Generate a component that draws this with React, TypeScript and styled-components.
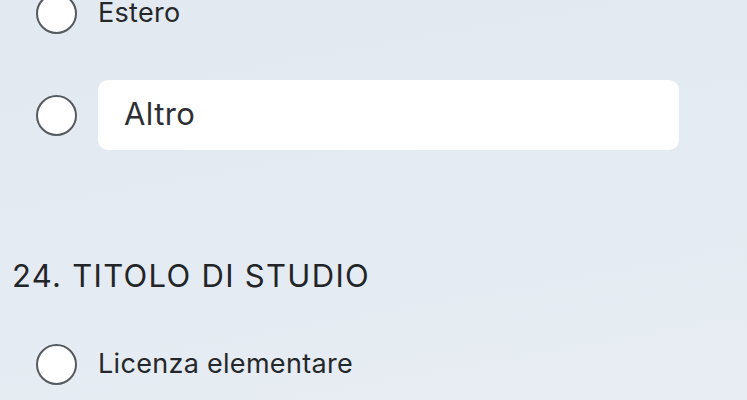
import React from "react";
import styled, { createGlobalStyle } from "styled-components";

const GlobalStyle = createGlobalStyle`
  html, body {
    margin: 0;
    padding: 0;
    background: #e4eaf1;
    font-family: Inter, Roboto, sans-serif;
    overflow: hidden;
  }
`;

const Page = styled.div`
  width: 747px;
  height: 400px;
  overflow: hidden;
  background: linear-gradient(170deg, #e3e9f0 0%, #e5ebf2 60%, #e7edf3 100%);
  display: flex;
  flex-direction: column;
`;

const Options = styled.div<{ $top: number; $gap?: number }>`
  display: flex;
  flex-direction: column;
  gap: ${(p) => p.$gap ?? 48}px;
  margin-top: ${(p) => p.$top}px;
  padding-left: 36px;
`;

const Row = styled.label`
  display: flex;
  align-items: center;
  gap: 21px;
`;

const Radio = styled.span`
  flex: none;
  width: 37px;
  height: 37px;
  border-radius: 50%;
  border: 2px solid #555a5e;
  background: #fff;
`;

const OptionText = styled.span`
  font-size: 27px;
  letter-spacing: 0.3px;
  color: #25282b;
  line-height: 40px;
  margin-top: -2px;
`;

const TextBox = styled.div`
  width: 555px;
  height: 70px;
  padding-left: 26px;
  box-sizing: content-box;
  border-radius: 10px;
  background: #fff;
  display: flex;
  align-items: center;
  font-size: 31px;
  letter-spacing: 0.4px;
  color: #2c2f33;

  span {
    margin-top: -4px;
  }
`;

const Title = styled.h2`
  margin: 106px 0 48px 12px;
  font-weight: 400;
  font-size: 31px;
  letter-spacing: 1.3px;
  line-height: 40px;
  color: #222528;
`;

export default function App() {
  return (
    <>
      <GlobalStyle />
      <Page>
        <Options $top={-7} $gap={46}>
          <Row>
            <Radio />
            <OptionText>Estero</OptionText>
          </Row>
          <Row>
            <Radio />
            <TextBox>
              <span>Altro</span>
            </TextBox>
          </Row>
        </Options>
        <Title>24. TITOLO DI STUDIO</Title>
        <Options $top={0}>
          <Row>
            <Radio />
            <OptionText>Licenza elementare</OptionText>
          </Row>
        </Options>
      </Page>
    </>
  );
}
